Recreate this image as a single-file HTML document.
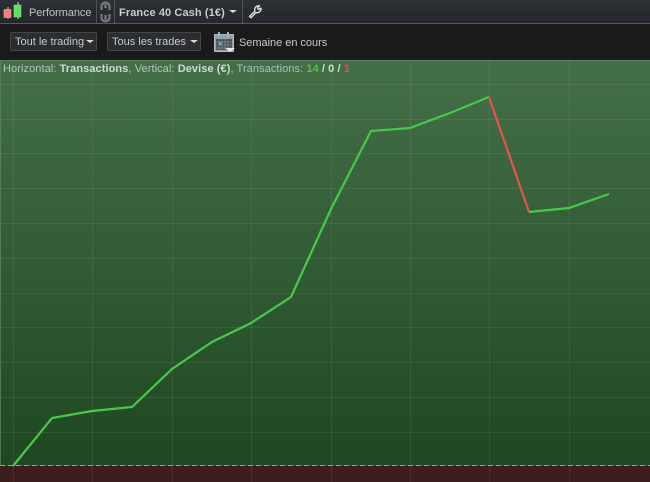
<!DOCTYPE html>
<html><head><meta charset="utf-8">
<style>
html,body{margin:0;padding:0;background:#1a1a1a}
#r{position:relative;width:650px;height:482px;overflow:hidden;font-family:"Liberation Sans",sans-serif;font-size:11px;color:#c8d0d8}
.a{position:absolute}
.top{left:0;top:0;width:650px;height:23px;background:linear-gradient(#2d3136,#24272b);border-bottom:1px solid #555a5e}
.sep{top:0;width:1px;height:23px;background:#4e5357}
.bar{left:0;top:24px;width:650px;height:36px;background:#1a1a1a}
.btn{top:32px;height:17px;background:#2c2d2e;border:1px solid #454648;border-radius:2px;line-height:19px;color:#c4cad0;padding-left:4px;box-sizing:content-box}
.car{position:absolute;top:7px;width:0;height:0;border-left:4px solid transparent;border-right:4px solid transparent;border-top:3px solid #d8d8d8}
.info{left:3px;top:62px;white-space:nowrap;color:#b4c4bc;font-size:11px;letter-spacing:.08px;line-height:14px}
.info b{color:#cfdad3}
.info span{color:#a8c0c0}
</style></head><body>
<div id="r">
<div class="a top"></div>
<svg class="a" style="left:3px;top:2px" width="20" height="18">
<line x1="5" y1="5" x2="5" y2="17" stroke="#ffa0a0"/>
<rect x="1" y="7.500" width="7" height="8" fill="#f08080" stroke="#ffb0b0" stroke-width=".5"/>
<line x1="15" y1="0" x2="15" y2="17" stroke="#a0ffa0"/>
<rect x="11" y="3" width="7" height="12" fill="#5fe05f" stroke="#90f090" stroke-width=".5"/>
</svg>
<div class="a" style="left:29px;top:6px;line-height:14px;letter-spacing:-.05px;color:#bcc4cc">Performance</div>
<div class="a sep" style="left:96px"></div>
<div class="a sep" style="left:114px"></div>
<svg class="a" style="left:99px;top:1px" width="13" height="22" fill="none" stroke="#74797e" stroke-width="2.200">
<path d="M2.500 9V5.500a4 4 0 0 1 8 0V9M6.500 3V7"/>
<path d="M2.500 13V16.500a4 4 0 0 0 8 0V13M6.500 14V19"/>
</svg>
<div class="a" style="left:119px;top:6px;line-height:14px;font-weight:bold;font-size:11px;letter-spacing:.1px;color:#c4ccd4">France 40 Cash (1€)</div>
<div class="car" style="left:229px;top:10px"></div>
<div class="a sep" style="left:242px"></div>
<svg class="a" style="left:248px;top:4px" width="15" height="15" fill="none">
<path d="M1.500 12.500 L7 7 C6 4 8 1.500 11.500 1.800 L9.500 4 L10.500 5.500 L13 4 C13.500 7 10.500 9.500 8 8.500 L3 13.800 Z" stroke="#e8e8e8" stroke-width="1.300" stroke-linejoin="round"/>
</svg>
<div class="a bar"></div>
<div class="a btn" style="left:10px;width:81px">Tout le trading<div class="car" style="left:75px"></div></div>
<div class="a btn" style="left:107px;width:88px">Tous les trades<div class="car" style="left:82px"></div></div>
<svg class="a" style="left:213px;top:31px" width="22" height="22">
<rect x="1.500" y="3.500" width="19" height="17" fill="#8fa2b2" stroke="#a9bac6"/>
<rect x="3" y="8" width="16" height="11" fill="#4a4c4e"/>
<path d="M3 11H19M3 14H19M3 17H19M6 8V19M9 8V19M12 8V19M15 8V19" stroke="#8b8d8f" stroke-width=".7"/>
<rect x="6" y="11" width="3" height="3" fill="#39b8ea"/>
<rect x="5" y="1" width="2" height="5" fill="#aab0bb"/><rect x="14" y="1" width="2" height="5" fill="#aab0bb"/>
<path d="M12 17H22L17 21Z" fill="#e8e8e8"/>
</svg>
<div class="a" style="left:239px;top:36px;line-height:14px;letter-spacing:-.03px;color:#c4ccd4">Semaine en cours</div>
<svg class="a" style="left:0;top:60px" width="650" height="422">
<defs><linearGradient id="g" x1="0" y1="0" x2="0" y2="1"><stop offset="0" stop-color="#456f48"/><stop offset="1" stop-color="#1f4822"/></linearGradient></defs>
<rect width="650" height="406" fill="url(#g)"/>
<rect y="0" width="650" height="1" fill="#5a8060"/>
<rect width="1" height="406" fill="#5f8865" opacity=".7"/>
<rect y="406" width="650" height="16" fill="#3d1e1e"/>
<g stroke="#fff" stroke-opacity=".07" shape-rendering="crispEdges">
<path d="M13.500 0V422M92.500 0V422M172.500 0V422M251.500 0V422M331.500 0V422M410.500 0V422M489.500 0V422M569.500 0V422"/>
<path d="M0 24.500H650M0 59.500H650M0 93.500H650M0 128.500H650M0 163.500H650M0 198.500H650M0 233.500H650M0 267.500H650M0 302.500H650M0 337.500H650M0 372.500H650"/>
</g>
<line x1="0" y1="405.500" x2="650" y2="405.500" stroke="#2a3a90" shape-rendering="crispEdges"/>
<line x1="0" y1="405.500" x2="650" y2="405.500" stroke="#d88a78" stroke-dasharray="5 3" shape-rendering="crispEdges"/>
<polyline points="13,406 52,358 92,351 132,347 172,309 212,282 251,263 291,237 331,149 371,71 410,68 450,53 489,37" fill="none" stroke="#47c94a" stroke-width="2.200"/>
<line x1="489" y1="37" x2="529" y2="152" stroke="#ea5050" stroke-width="2.200"/>
<polyline points="529,152 569,148 609,134" fill="none" stroke="#47c94a" stroke-width="2.200"/>
</svg>
<div class="a info">Horizontal: <b>Transactions</b>, Vertical: <b>Devise (€)</b>, <span>Transactions:</span> <b style="color:#45c54a">14</b> <b>/ 0 /</b> <b style="color:#ea4a4a">1</b></div>
</div>
</body></html>
